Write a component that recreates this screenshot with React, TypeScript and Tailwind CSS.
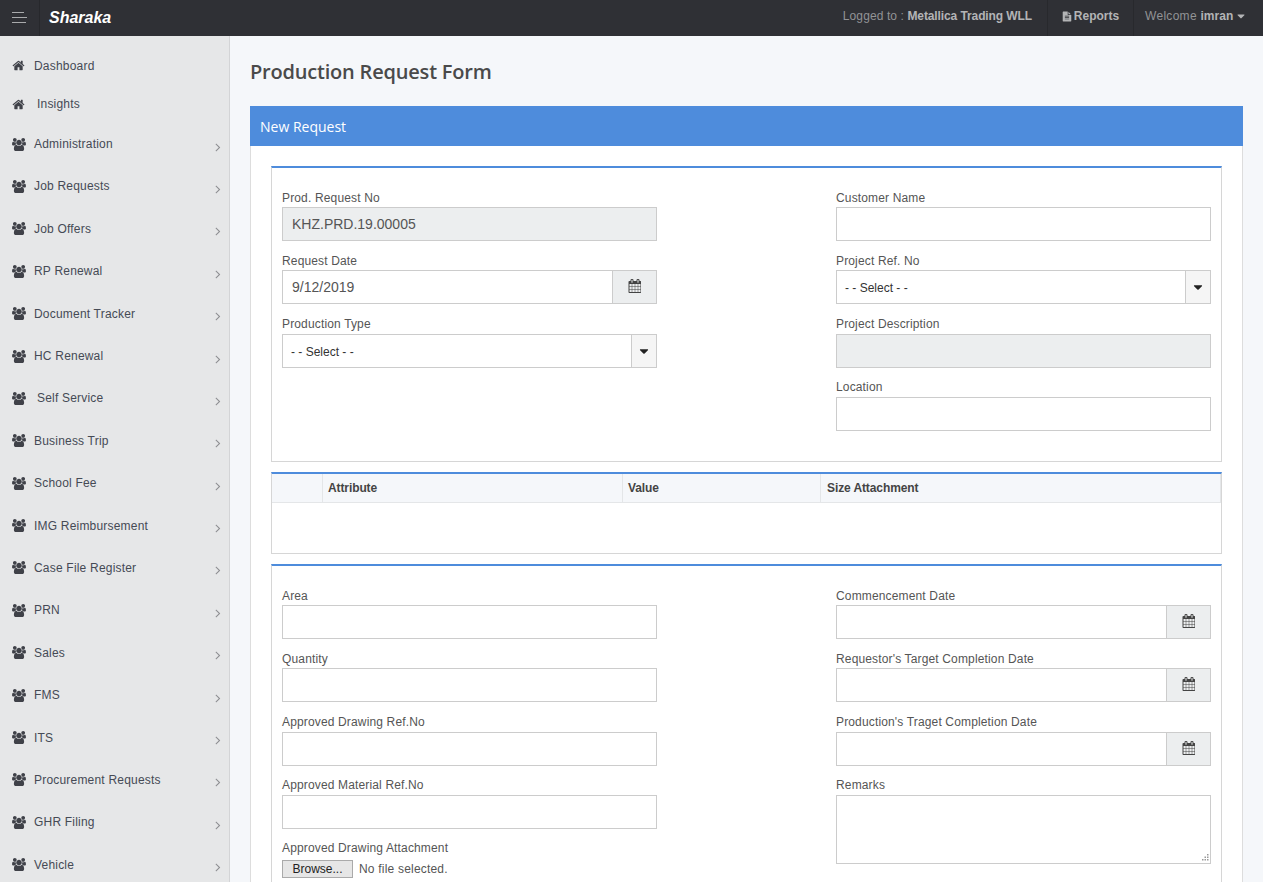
import React from "react";
import { FaCaretDown } from "react-icons/fa";

const CalendarIcon = () => (
  <svg width="13" height="14" viewBox="0 0 1664 1792" className="text-[#444]">
    <path
      fill="currentColor"
      d="M192 1664h288v-288h-288v288zm352 0h320v-288h-320v288zm-352-352h288v-320h-288v320zm352 0h320v-320h-320v320zm-352-384h288v-288h-288v288zm736 736h320v-288h-320v288zm-384-736h320v-288h-320v288zm768 736h288v-288h-288v288zm-384-352h320v-320h-320v320zm-352-864v-288q0-13-9.500-22.500t-22.500-9.500h-64q-13 0-22.500 9.500t-9.500 22.500v288q0 13 9.500 22.500t22.500 9.500h64q13 0 22.500-9.500t9.500-22.500zm736 864h288v-320h-288v320zm-384-384h320v-288h-320v288zm384 0h288v-288h-288v288zm32-480v-288q0-13-9.500-22.500t-22.500-9.500h-64q-13 0-22.500 9.500t-9.500 22.500v288q0 13 9.500 22.500t22.500 9.500h64q13 0 22.500-9.500t9.500-22.500zm384-64v1280q0 52-38 90t-90 38h-1408q-52 0-90-38t-38-90v-1280q0-52 38-90t90-38h128v-96q0-66 47-113t113-47h64q66 0 113 47t47 113v96h384v-96q0-66 47-113t113-47h64q66 0 113 47t47 113v96h128q52 0 90 38t38 90z"
    />
  </svg>
);

const HomeIcon = () => (
  <svg width="13" height="13" viewBox="0 0 1792 1792" className="shrink-0 text-[#3f4148]">
    <path
      fill="currentColor"
      d="M1472 992v480q0 26-19 45t-45 19h-384v-384h-256v384h-384q-26 0-45-19t-19-45v-480q0-1 .5-3t.5-3l575-474 575 474q1 2 1 6zm223-69l-62 74q-8 9-21 11h-3q-13 0-21-7l-692-577-692 577q-12 8-24 7-13-2-21-11l-62-74q-8-10-7-23.500t11-21.500l719-599q32-26 76-26t76 26l244 204v-195q0-14 9-23t23-9h192q14 0 23 9t9 23v408l219 182q10 8 11 21.500t-7 23.500z"
    />
  </svg>
);

const UsersIcon = () => (
  <svg width="14" height="13" viewBox="0 0 1920 1792" className="shrink-0 text-[#3f4148]">
    <path
      fill="currentColor"
      d="M593 896q-162 5-265 128h-134q-82 0-138-40.500t-56-118.500q0-353 124-353 6 0 43.500 21t97.500 42.500 119 21.500q67 0 133-23-5 37-5 66 0 139 81 256zm1071 637q0 120-73 189.500t-194 69.500h-874q-121 0-194-69.500t-73-189.500q0-53 3.500-103.500t14-109 26.500-108.500 43-97.500 62-81 85.500-53.500 111.500-20q10 0 43 21.500t73 48 107 48 135 21.500 135-21.500 107-48 73-48 43-21.500q61 0 111.500 20t85.500 53.500 62 81 43 97.500 26.500 108.500 14 109 3.500 103.500zm-1024-1277q0 106-75 181t-181 75-181-75-75-181 75-181 181-75 181 75 75 181zm704 384q0 159-112.500 271.500t-271.500 112.500-271.500-112.500-112.500-271.500 112.500-271.500 271.500-112.500 271.500 112.500 112.500 271.500zm576 225q0 78-56 118.500t-138 40.500h-134q-103-123-265-128 81-117 81-256 0-29-5-66 66 23 133 23 59 0 119-21.500t97.500-42.500 43.500-21q124 0 124 353zm-128-609q0 106-75 181t-181 75-181-75-75-181 75-181 181-75 181 75 75 181z"
    />
  </svg>
);

const AngleIcon = () => (
  <svg width="14" height="14" viewBox="0 0 1792 1792" className="mt-[5px] shrink-0 text-[#8e8f92]">
    <path
      fill="currentColor"
      d="M1171 960q0 13-10 23l-466 466q-10 10-23 10t-23-10l-50-50q-10-10-10-23t10-23l393-393-393-393q-10-10-10-23t10-23l50-50q10-10 23-10t23 10l466 466q10 10 10 23z"
    />
  </svg>
);

const FileIcon = () => (
  <svg width="10" height="11" viewBox="0 0 1792 1792" className="mr-[2px] text-[#b3b4b6]">
    <path
      fill="currentColor"
      d="M1596 476q14 14 28 36h-472v-472q22 14 36 28zm-476 164h544v1056q0 40-28 68t-68 28h-1344q-40 0-68-28t-28-68v-1600q0-40 28-68t68-28h800v544q0 40 28 68t68 28zm160 736v-64q0-14-9-23t-23-9h-704q-14 0-23 9t-9 23v64q0 14 9 23t23 9h704q14 0 23-9t9-23zm0-256v-64q0-14-9-23t-23-9h-704q-14 0-23 9t-9 23v64q0 14 9 23t23 9h704q14 0 23-9t9-23zm0-256v-64q0-14-9-23t-23-9h-704q-14 0-23 9t-9 23v64q0 14 9 23t23 9h704q14 0 23-9t9-23z"
    />
  </svg>
);

const navTop = [
  { label: "Dashboard", indent: false, h: "h-[39.9px]" },
  { label: "Insights", indent: true, h: "h-[37px]" },
];
const navSub = [
  { label: "Administration" },
  { label: "Job Requests" },
  { label: "Job Offers" },
  { label: "RP Renewal" },
  { label: "Document Tracker" },
  { label: "HC Renewal" },
  { label: "Self Service", indent: true },
  { label: "Business Trip" },
  { label: "School Fee" },
  { label: "IMG Reimbursement" },
  { label: "Case File Register" },
  { label: "PRN" },
  { label: "Sales" },
  { label: "FMS" },
  { label: "ITS" },
  { label: "Procurement Requests" },
  { label: "GHR Filing" },
  { label: "Vehicle" },
];

const Label = ({ children, short }: { children: React.ReactNode; short?: boolean }) => (
  <div className={`${short ? "h-[16px]" : "h-[17px]"} text-[12px] leading-[14px] tracking-[0.15px] text-[#555]`}>{children}</div>
);

type Props = { label: string; short?: boolean; disabled?: boolean; value?: string };

const Field = ({ label, disabled, value, short }: Props) => (
  <div className={short ? "mb-[13px]" : "mb-3"}>
    <Label short={short}>{label}</Label>
    <div
      className={`flex h-[34px] w-full items-center border border-[#cccccc] px-[9px] text-[14px] text-[#555] ${
        disabled ? "bg-[#eceeef]" : "bg-white"
      }`}
    >
      {value}
    </div>
  </div>
);

const DateField = ({ label, value, short }: Props) => (
  <div className={short ? "mb-[13px]" : "mb-3"}>
    <Label short={short}>{label}</Label>
    <div className="flex h-[34px] w-full">
      <div className="flex flex-1 items-center border border-[#cccccc] bg-white px-[9px] text-[14px] text-[#555]">{value}</div>
      <div className="flex w-[44px] items-center justify-center border border-l-0 border-[#cccccc] bg-[#eceeef] pb-[2px]">
        <CalendarIcon />
      </div>
    </div>
  </div>
);

const SelectField = ({ label, short }: Props) => (
  <div className={short ? "mb-[13px]" : "mb-3"}>
    <Label short={short}>{label}</Label>
    <div className="flex h-[34px] w-full border border-[#cccccc] bg-white">
      <div className="flex flex-1 items-center pl-[8px] pt-[2px] text-[12px] text-[#333]">- - Select - -</div>
      <div className="flex w-[25px] items-center justify-center border-l border-[#cccccc] bg-[#f5f5f5]">
        <FaCaretDown className="text-[14px] text-[#222]" />
      </div>
    </div>
  </div>
);

export default function App() {
  return (
    <div className="h-[882px] w-[1263px] overflow-hidden bg-[#f5f7fa] font-['Liberation_Sans',Arial,sans-serif]">
      <header className="flex h-[36px] items-stretch bg-[#2f3035]">
        <div className="flex w-[40px] flex-col items-start justify-center gap-[4px] border-r border-[#27282c] pl-[12px] pb-[1px]">
          <span className="h-px w-[12px] bg-[#a9aaac]" />
          <span className="h-px w-[15px] bg-[#a9aaac]" />
          <span className="h-px w-[14px] bg-[#a9aaac]" />
        </div>
        <div className="ml-[9px] flex flex-1 items-center text-[16px] font-bold italic text-white">Sharaka</div>
        <div className="flex items-center pb-[4px] pr-[15px] text-[12px] tracking-[0.1px] text-[#929396]">
          Logged to :&nbsp;<b className="tracking-[-0.1px] text-[#b3b4b6]">Metallica Trading WLL</b>
        </div>
        <div className="flex w-[87px] items-center justify-center border-x border-[#28292d] pb-[4px] text-[12px] font-bold text-[#b3b4b6]">
          <FileIcon />
          Reports
        </div>
        <div className="flex w-[129px] items-center pb-[4px] pl-[11px] text-[12px] tracking-[0.3px] text-[#929396]">
          Welcome&nbsp;<b className="tracking-normal text-[#b3b4b6]">imran</b>
          <FaCaretDown className="ml-[2px] text-[12px] text-[#b3b4b6]" />
        </div>
      </header>

      <div className="flex h-[846px]">
        <aside className="h-full w-[230px] shrink-0 overflow-hidden border-r border-[#d3d4d6] bg-[#e6e7e8] pt-[10px] text-[12px] tracking-[0.2px] text-[#454a55]">
          {navTop.map((n) => (
            <div key={n.label} className={`flex items-center pl-[12px] ${n.h}`}>
              <HomeIcon />
              <span className={n.indent ? "ml-[12px]" : "ml-[9px]"}>{n.label}</span>
            </div>
          ))}
          {navSub.map((n) => (
            <div key={n.label} className="flex h-[42.4px] items-center pl-[12px] pr-[4px]">
              <UsersIcon />
              <span className={`flex-1 ${n.indent ? "ml-[11px]" : "ml-[8px]"}`}>{n.label}</span>
              <AngleIcon />
            </div>
          ))}
        </aside>

        <main className="flex-1 overflow-hidden pl-[20px] pr-[20px]">
          <h1 className="h-[70px] pt-[23px] font-['Open_Sans',sans-serif] text-[20px] font-semibold leading-[26px] tracking-[-0.2px] text-[#4a4a4a]">
            Production Request Form
          </h1>
          <section className="border-x border-[#dddddd] bg-white">
            <div className="-mx-px flex h-[40px] items-center bg-[#4e8cdc] pl-[10px] font-['Open_Sans',sans-serif] text-[14px] text-white">
              New Request
            </div>
            <div className="px-[20px] pt-[20px]">
              <div className="h-[296px] border border-t-2 border-[#d6d6d6] border-t-[#4e8cdc] px-[10px] pt-[23px]">
                <div className="grid grid-cols-[375px_375px] justify-between">
                  <div>
                    <Field short label="Prod. Request No" disabled value="KHZ.PRD.19.00005" />
                    <DateField short label="Request Date" value="9/12/2019" />
                    <SelectField label="Production Type" />
                  </div>
                  <div>
                    <Field short label="Customer Name" />
                    <SelectField short label="Project Ref. No" />
                    <Field label="Project Description" disabled />
                    <Field label="Location" />
                  </div>
                </div>
              </div>

              <div className="mt-[10px] h-[82px] border border-t-2 border-[#d6d6d6] border-t-[#4e8cdc]">
                <div className="grid h-[29px] grid-cols-[51px_300px_198px_1fr] border-b border-[#e4e6e8] bg-[#f5f7fa] text-[12px] font-bold tracking-[-0.1px] text-[#444]">
                  <div className="border-r border-[#e4e6e8]" />
                  <div className="flex items-center border-r border-[#e4e6e8] pl-[5px]">Attribute</div>
                  <div className="flex items-center border-r border-[#e4e6e8] pl-[5px]">Value</div>
                  <div className="flex items-center border-r border-[#e4e6e8] pl-[6px]">Size Attachment</div>
                </div>
              </div>

              <div className="mt-[10px] h-[400px] border-x border-t-2 border-[#d6d6d6] border-t-[#4e8cdc] px-[10px] pt-[23px]">
                <div className="grid grid-cols-[375px_375px] justify-between">
                  <div>
                    <Field short label="Area" />
                    <Field short label="Quantity" />
                    <Field label="Approved Drawing Ref.No" />
                    <Field label="Approved Material Ref.No" />
                    <Label>Approved Drawing Attachment</Label>
                    <div className="mt-[2px] flex items-center text-[12px] tracking-[0.2px] text-[#555]">
                      <span className="flex h-[18px] w-[71px] items-center justify-center border border-[#aaaaaa] bg-[#e6e6e6] tracking-normal text-[#222]">
                        Browse...
                      </span>
                      <span className="ml-[6px]">No file selected.</span>
                    </div>
                  </div>
                  <div>
                    <DateField short label="Commencement Date" />
                    <DateField short label="Requestor's Target Completion Date" />
                    <DateField label="Production's Traget Completion Date" />
                    <Label>Remarks</Label>
                    <div className="relative h-[69px] border border-[#cccccc] bg-white">
                      <svg width="9" height="9" viewBox="0 0 9 9" className="absolute bottom-px right-px text-[#999]">
                        <path fill="currentColor" d="M7 1h1.500v1.500H7zM4.500 3.500H6V5H4.500zM7 3.500h1.500V5H7zM2 6h1.500v1.500H2zM4.500 6H6v1.500H4.500zM7 6h1.500v1.500H7z" />
                      </svg>
                    </div>
                  </div>
                </div>
              </div>
            </div>
          </section>
        </main>
      </div>
    </div>
  );
}
